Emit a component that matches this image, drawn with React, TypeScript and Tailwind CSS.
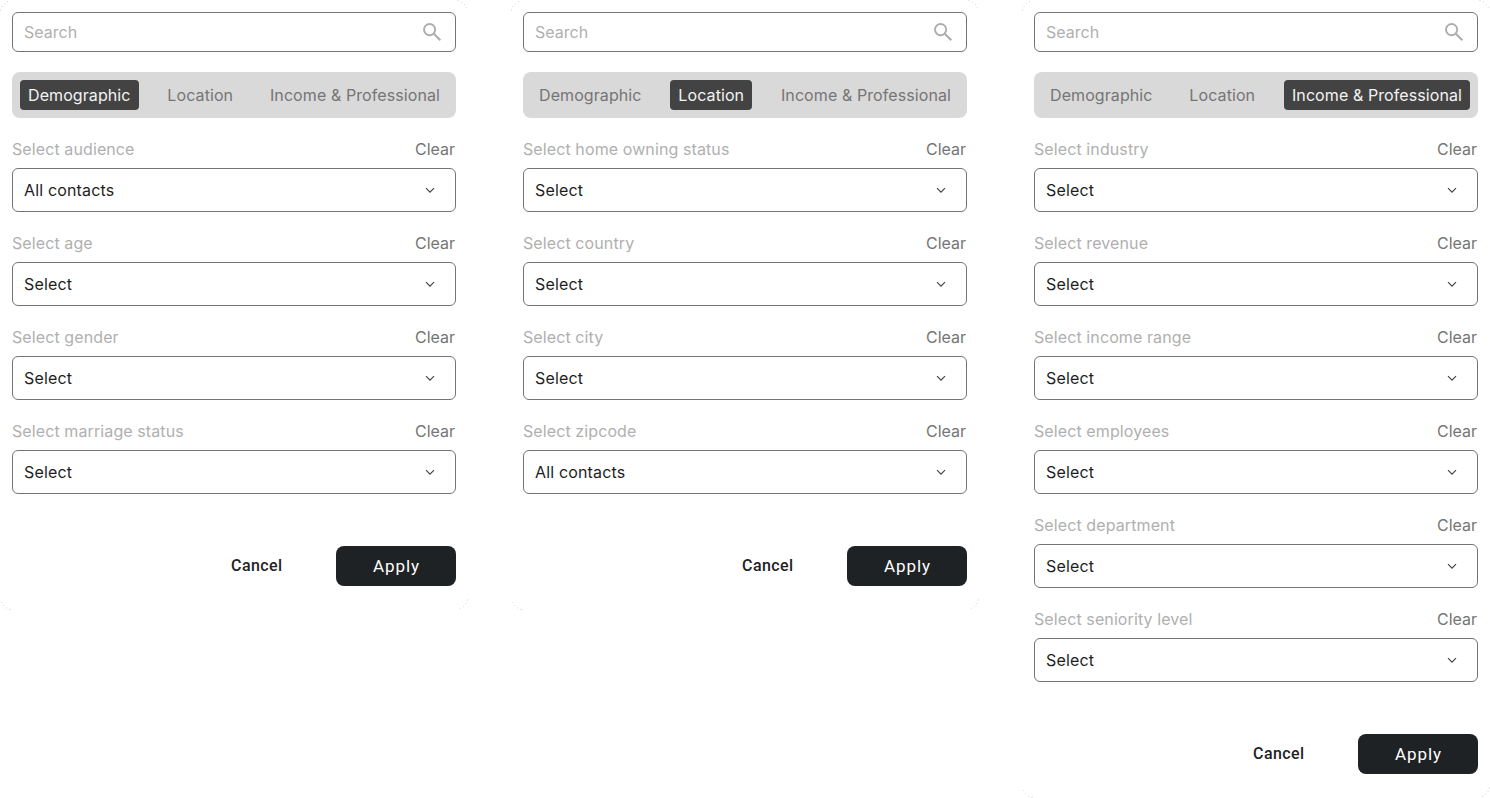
import clsx from "clsx";

const TABS = ["Demographic", "Location", "Income & Professional"];

type Field = {
  label: string;
  value: string;
};

type Panel = {
  activeTab: string;
  fields: Field[];
};

const PANELS: Panel[] = [
  {
    activeTab: "Demographic",
    fields: [
      { label: "Select audience", value: "All contacts" },
      { label: "Select age", value: "Select" },
      { label: "Select gender", value: "Select" },
      { label: "Select marriage status", value: "Select" },
    ],
  },
  {
    activeTab: "Location",
    fields: [
      { label: "Select home owning status", value: "Select" },
      { label: "Select country", value: "Select" },
      { label: "Select city", value: "Select" },
      { label: "Select zipcode", value: "All contacts" },
    ],
  },
  {
    activeTab: "Income & Professional",
    fields: [
      { label: "Select industry", value: "Select" },
      { label: "Select revenue", value: "Select" },
      { label: "Select income range", value: "Select" },
      { label: "Select employees", value: "Select" },
      { label: "Select department", value: "Select" },
      { label: "Select seniority level", value: "Select" },
    ],
  },
];

const SearchIcon = () => (
  <svg width="20" height="20" viewBox="0 0 20 20" fill="none" stroke="#adadad">
    <circle cx="7.6" cy="7.6" r="5.6" strokeWidth="1.9" />
    <path d="M11.8 11.8L18.3 18.3" strokeWidth="2.1" />
  </svg>
);

const ChevronIcon = () => (
  <svg width="10" height="6" viewBox="0 0 10 6" fill="none" stroke="#444444">
    <path d="M1 1.2L5 5.2L9 1.2" strokeWidth="1.15" />
  </svg>
);

// faint dotted arc on a rounded corner of the panel
const Corner = ({ className }: { className: string }) => (
  <svg
    className={clsx("pointer-events-none absolute", className)}
    width="12"
    height="12"
    viewBox="0 0 12 12"
    fill="none"
    stroke="#c8c8c8"
  >
    <path d="M0.5 10.5Q2 3 10.5 0.5" strokeWidth="0.9" strokeDasharray="1 2.8" />
  </svg>
);

const SelectField = ({ label, value }: Field) => (
  <div className="flex flex-col gap-[9px]">
    <div className="flex h-5 items-center justify-between pr-px leading-5">
      <span className="tracking-[0.1px] text-[#b0b0b0]">{label}</span>
      <button className="text-[#757575]">Clear</button>
    </div>
    <button className="flex h-11 items-center justify-between rounded-md border border-[#757575] bg-white pr-5 pl-[11px] tracking-[0.16px] text-[#1e1e1e]">
      <span>{value}</span>
      <ChevronIcon />
    </button>
  </div>
);

const FilterPanel = ({ activeTab, fields }: Panel) => (
  <section className="relative w-[468px] bg-white px-3 pt-3 pb-6">
    <Corner className="top-0 left-0" />
    <Corner className="top-0 right-0 rotate-90" />
    <Corner className="right-0 bottom-0 rotate-180" />
    <Corner className="bottom-0 left-0 -rotate-90" />

    <div className="flex h-10 items-center justify-between rounded-md border border-[#757575] pr-[13px] pl-[11px]">
      <span className="text-[#b0b0b0]">Search</span>
      <SearchIcon />
    </div>

    <div className="mt-5 flex h-[46px] items-center justify-between rounded-lg bg-[#d9d9d9] px-2">
      {TABS.map((tab) => (
        <button
          key={tab}
          className={clsx(
            "h-[30px] rounded px-2 tracking-[0.09px]",
            tab === activeTab ? "bg-[#434343] text-[#f3f3f3]" : "text-[#757575]"
          )}
        >
          {tab}
        </button>
      ))}
    </div>

    <div className="mt-[21px] flex flex-col gap-[21px]">
      {fields.map((field) => (
        <SelectField key={field.label} {...field} />
      ))}
    </div>

    <div className="mt-[52px] flex h-10 items-center justify-end gap-[53.5px] font-['Roboto',sans-serif]">
      <button className="pb-px font-medium tracking-[0.4px] text-[#1f2224]">Cancel</button>
      <button className="h-10 w-[120px] rounded-lg bg-[#1f2224] pt-px pl-px text-[17px] tracking-[0.9px] text-white">
        Apply
      </button>
    </div>
  </section>
);

export default function App() {
  return (
    <main className="flex h-[798px] items-start gap-[43px] overflow-hidden bg-white font-['Inter',sans-serif] text-base">
      {PANELS.map((panel) => (
        <FilterPanel key={panel.activeTab} {...panel} />
      ))}
    </main>
  );
}
